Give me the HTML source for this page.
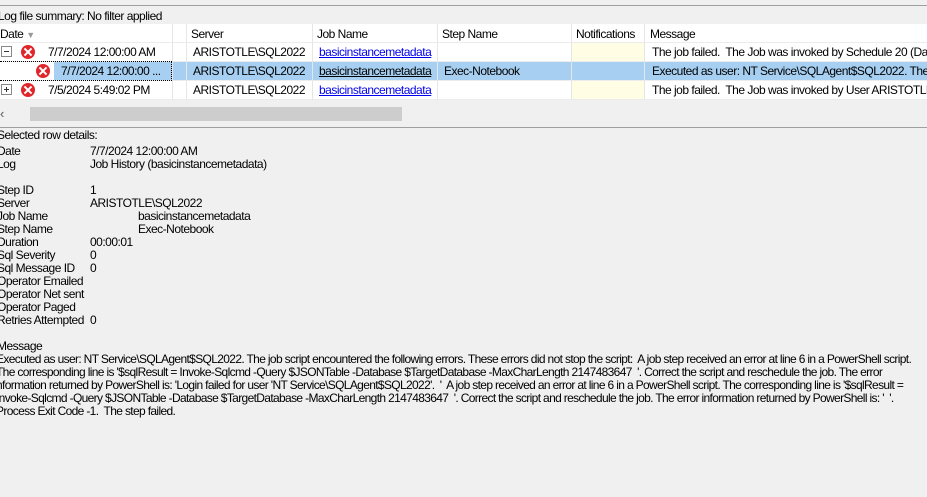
<!DOCTYPE html>
<html><head><meta charset="utf-8"><style>
*{margin:0;padding:0;box-sizing:border-box}
body{width:927px;height:497px;overflow:hidden;background:#f0f0f0;font-family:"Liberation Sans",sans-serif;font-size:12px;letter-spacing:-0.5px;color:#000;position:relative}
.a{position:absolute;white-space:nowrap}
.hl{position:absolute;background:#a0a0a0;height:1px}
.grid{position:absolute;left:0;top:24px;width:927px;height:76px;background:#fff;overflow:hidden}
.vl{position:absolute;width:1px;background:#e6e6e6;top:0;height:76px}
.hr{position:absolute;left:0;width:927px;height:1px;background:#ececec}
.link{color:#0000ee;text-decoration:underline}
.x{position:absolute;width:14px;height:14px;border-radius:50%;background:#e0262b}
.x:before,.x:after{content:"";position:absolute;left:6px;top:2px;width:2px;height:10px;background:#fff;transform:rotate(45deg)}
.x:after{transform:rotate(-45deg)}
.bx{position:absolute;width:11px;height:11px;border:1px solid #888;background:#fff}
.bx:before{content:"";position:absolute;left:2px;top:4px;width:5px;height:1px;background:#333}
.pl:after{content:"";position:absolute;left:4px;top:2px;width:1px;height:5px;background:#333}
.d{position:absolute;left:-3px;white-space:nowrap;line-height:13px}
</style></head><body>
<div class="hl" style="left:0;top:5px;width:927px"></div>
<div class="a" style="left:-2px;top:9px">Log file summary: No filter applied</div>
<div class="grid">
 <div class="hr" style="top:18px"></div>
 <div class="hr" style="top:37px"></div>
 <div class="hr" style="top:56px"></div>
 <div class="hr" style="top:75px"></div>
 <div style="position:absolute;left:571px;top:19px;width:73px;height:18px;background:#fffde3"></div>
 <div style="position:absolute;left:571px;top:57px;width:73px;height:18px;background:#fffde3"></div>
 <div style="position:absolute;left:54px;top:38px;width:873px;height:18px;background:#a6cff1"></div>
 <div style="position:absolute;left:0;top:37px;width:172px;height:20px;border:1px dotted #000;border-left:none"></div>
 <div class="vl" style="left:172px"></div><div class="vl" style="left:186px"></div>
 <div class="vl" style="left:312px"></div><div class="vl" style="left:437px"></div>
 <div class="vl" style="left:571px"></div><div class="vl" style="left:644px"></div>
 <div class="a" style="left:0;top:3px">Date <span style="color:#999;font-size:9px">▼</span></div>
 <div class="a" style="left:191px;top:3px">Server</div>
 <div class="a" style="left:317px;top:3px">Job Name</div>
 <div class="a" style="left:442px;top:3px">Step Name</div>
 <div class="a" style="left:576px;top:3px">Notifications</div>
 <div class="a" style="left:650px;top:3px">Message</div>
 <div class="bx" style="left:1px;top:22px"></div><div class="x" style="left:21px;top:21px"></div>
 <div class="a" style="left:48px;top:21px">7/7/2024 12:00:00 AM</div>
 <div class="a" style="left:193px;top:21px">ARISTOTLE\SQL2022</div>
 <div class="a link" style="left:319px;top:21px">basicinstancemetadata</div>
 <div class="a" style="left:652px;top:21px">The job failed.&nbsp; The Job was invoked by Schedule 20 (Daily)</div>
 <div class="x" style="left:36px;top:40px"></div>
 <div class="a" style="left:61px;top:40px">7/7/2024 12:00:00 ...</div>
 <div class="a" style="left:193px;top:40px">ARISTOTLE\SQL2022</div>
 <div class="a" style="left:319px;top:40px;text-decoration:underline">basicinstancemetadata</div>
 <div class="a" style="left:444px;top:40px">Exec-Notebook</div>
 <div class="a" style="left:652px;top:40px">Executed as user: NT Service\SQLAgent$SQL2022. The job</div>
 <div class="bx pl" style="left:1px;top:60px"></div><div class="x" style="left:21px;top:59px"></div>
 <div class="a" style="left:48px;top:59px">7/5/2024 5:49:02 PM</div>
 <div class="a" style="left:193px;top:59px">ARISTOTLE\SQL2022</div>
 <div class="a link" style="left:319px;top:59px">basicinstancemetadata</div>
 <div class="a" style="left:652px;top:59px">The job failed.&nbsp; The Job was invoked by User ARISTOTLE\</div>
</div>
<div style="position:absolute;left:30px;top:107px;width:372px;height:14px;background:#cdcdcd"></div>
<div class="a" style="left:0;top:106px;font-size:13px;color:#555">‹</div>
<div class="hl" style="left:0;top:127px;width:927px"></div>
<div class="d" style="top:129px">Selected row details:</div>
<div class="d" style="top:145px">Date<br>Log<br><br>Step ID<br>Server<br>Job Name<br>Step Name<br>Duration<br>Sql Severity<br>Sql Message ID<br>Operator Emailed<br>Operator Net sent<br>Operator Paged<br>Retries Attempted<br><br>Message</div>
<div class="d" style="top:145px;left:90px">7/7/2024 12:00:00 AM<br>Job History (basicinstancemetadata)<br><br>1<br>ARISTOTLE\SQL2022<br><br><br>00:00:01<br>0<br>0<br><br><br><br>0</div>
<div class="d" style="top:210px;left:138px">basicinstancemetadata<br>Exec-Notebook</div>
<div class="d" style="top:353px;left:-4px;letter-spacing:-0.65px;width:931px;overflow:hidden">Executed as user: NT Service\SQLAgent$SQL2022. The job script encountered the following errors. These errors did not stop the script:&nbsp; A job step received an error at line 6 in a PowerShell script.<br>The corresponding line is '$sqlResult = Invoke-Sqlcmd -Query $JSONTable -Database $TargetDatabase -MaxCharLength 2147483647&nbsp; '. Correct the script and reschedule the job. The error<br>nformation returned by PowerShell is: 'Login failed for user 'NT Service\SQLAgent$SQL2022'.&nbsp; '&nbsp; A job step received an error at line 6 in a PowerShell script. The corresponding line is '$sqlResult =<br>Invoke-Sqlcmd -Query $JSONTable -Database $TargetDatabase -MaxCharLength 2147483647&nbsp; '. Correct the script and reschedule the job. The error information returned by PowerShell is: '&nbsp; '.<br>Process Exit Code -1.&nbsp; The step failed.</div>
</body></html>
